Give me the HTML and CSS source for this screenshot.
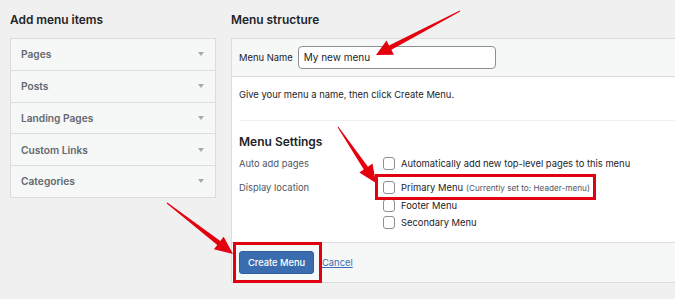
FILE: index.html
```html
<!DOCTYPE html>
<html lang="en">
<head>
    <meta charset="UTF-8">
    <title>Menus</title>
    <link rel="stylesheet" href="styles.css">
</head>
<body>
    <div class="wrap">
        <!-- left column: add menu items -->
        <div class="col-left">
            <h2>Add menu items</h2>
            <div class="accordion">
                <div class="acc-row">Pages <span class="caret"></span></div>
                <div class="acc-row">Posts <span class="caret"></span></div>
                <div class="acc-row">Landing Pages <span class="caret"></span></div>
                <div class="acc-row">Custom Links <span class="caret"></span></div>
                <div class="acc-row">Categories <span class="caret"></span></div>
            </div>
        </div>

        <!-- right column: menu structure -->
        <div class="col-right">
            <h2>Menu structure</h2>
            <div class="menu-box">
                <div class="menu-head">
                    <label>Menu Name</label>
                    <div class="name-input">My new menu</div>
                </div>
                <div class="menu-body">
                    <p class="hint">Give your menu a name, then click Create Menu.</p>
                    <div class="settings">
                        <h3>Menu Settings</h3>
                        <div class="set-row">
                            <div class="set-label">Auto add pages</div>
                            <div class="set-opts">
                                <div class="opt"><span class="check"></span>Automatically add new top-level pages to this menu</div>
                            </div>
                        </div>
                        <div class="set-row">
                            <div class="set-label">Display location</div>
                            <div class="set-opts">
                                <div class="opt opt-first"><span class="check"></span>Primary Menu <small>(Currently set to: Header-menu)</small></div>
                                <div class="opt"><span class="check"></span>Footer Menu</div>
                                <div class="opt"><span class="check"></span>Secondary Menu</div>
                            </div>
                        </div>
                    </div>
                </div>
                <div class="menu-foot">
                    <button class="btn-primary">Create Menu</button>
                    <a href="#" class="cancel">Cancel</a>
                </div>
            </div>
        </div>
    </div>

    <!-- annotations -->
    <div class="mark mark-primary"></div>
    <div class="mark mark-button"></div>
    <svg class="arrows" width="675" height="299" viewBox="0 0 675 299">
        <polygon points="459.8,10.6 389,45.4 386.5,40.5 376,55 393.9,54.7 391.4,49.8 460.2,11.4"/>
        <polygon points="338.4,126.7 368,166.7 372.5,163.6 376,183 359.3,172.6 363.8,169.5 337.6,127.3"/>
        <polygon points="167.3,202.6 220.3,241 223.7,236.7 233,254 213.9,249.3 217.3,245 166.7,203.4"/>
    </svg>
</body>
</html>
```

FILE: styles.css
```css
body {
    margin: 0;
    padding: 0;
    background-color: #f0f0f1;
    font-family: Inter, "Open Sans", sans-serif;
    font-size: 9.4px;
    color: #3c434a;
    overflow: hidden;
    width: 675px;
    height: 299px;
    position: relative;
}

.wrap {
    display: flex;
    gap: 15px;
    padding: 0 0 0 10px;
    width: 700px;
}

h2 {
    font-size: 11.9px;
    font-weight: 600;
    color: #1d2327;
    margin: 0;
    height: 38px;
    line-height: 40px;
}

.col-left {
    width: 206px;
    flex-shrink: 0;
}

.accordion {
    border: 1px solid #dcdcde;
    background-color: #f6f7f7;
}

.acc-row {
    display: flex;
    justify-content: space-between;
    align-items: center;
    height: 30.75px;
    padding: 0 10px;
    font-size: 10.2px;
    font-weight: 600;
    color: #646970;
    border-top: 1px solid #dcdcde;
}

.acc-row:first-child {
    border-top: none;
}

.caret {
    width: 0;
    height: 0;
    border-left: 3.5px solid transparent;
    border-right: 3.5px solid transparent;
    border-top: 4px solid #a7aaad;
    margin-right: 1px;
}

.col-right {
    flex: 1;
}

.menu-box {
    border: 1px solid #dcdcde;
    background-color: #fff;
}

.menu-head {
    display: flex;
    align-items: center;
    gap: 5px;
    height: 37px;
    padding: 0 7px;
    background-color: #f6f7f7;
    border-bottom: 1px solid #dcdcde;
    font-size: 9.4px;
    color: #1d2327;
}

.name-input {
    width: 186px;
    height: 21px;
    line-height: 21px;
    padding: 0 5px;
    border: 1px solid #8c8f94;
    border-radius: 4px;
    background: #fff;
    font-size: 10px;
    color: #1d2327;
}

.menu-body {
    padding: 0 0 11px 7px;
}

.hint {
    margin: 0;
    height: 43px;
    line-height: 36px;
    color: #1d2327;
    border-bottom: 1px solid #f0f0f1;
}

.settings h3 {
    margin: 0 0 5px 0;
    padding-top: 13px;
    font-size: 12px;
    font-weight: 600;
    color: #1d2327;
    line-height: 16px;
}

.set-row {
    display: flex;
}

.set-row + .set-row {
    margin-top: 7px;
}

.set-label {
    width: 144px;
    color: #50575e;
    line-height: 17px;
}

.set-opts {
    display: flex;
    flex-direction: column;
}

.opt {
    display: flex;
    align-items: center;
    height: 17px;
    color: #1d2327;
}

.opt-first {
    margin-bottom: 1px;
}

.opt small {
    font-size: 8.2px;
    color: #50575e;
    margin-left: 3px;
}

.check {
    display: inline-block;
    width: 10px;
    height: 11px;
    border: 1px solid #8c8f94;
    border-radius: 3px;
    background: #fff;
    margin-right: 6px;
}

.menu-foot {
    display: flex;
    align-items: center;
    gap: 8px;
    height: 39px;
    padding: 0 7px;
    background-color: #f6f7f7;
    border-top: 1px solid #dcdcde;
}

.btn-primary {
    background-color: #3a6db0;
    color: #fff;
    border: 1px solid #2c5f9e;
    border-radius: 3px;
    height: 23px;
    width: 75px;
    padding: 0;
    font-family: inherit;
    font-size: 9.3px;
    font-weight: 500;
}

.cancel {
    color: #3a6db0;
    font-size: 9.4px;
}

/* annotation layer */
.mark {
    position: absolute;
    border: 3px solid #e1000f;
    box-sizing: border-box;
}

.mark-primary {
    left: 375px;
    top: 174px;
    width: 221px;
    height: 26px;
}

.mark-button {
    left: 233px;
    top: 242px;
    width: 89px;
    height: 41px;
}

.arrows {
    position: absolute;
    left: 0;
    top: 0;
}

.arrows polygon {
    fill: #e5000e;
}
```
